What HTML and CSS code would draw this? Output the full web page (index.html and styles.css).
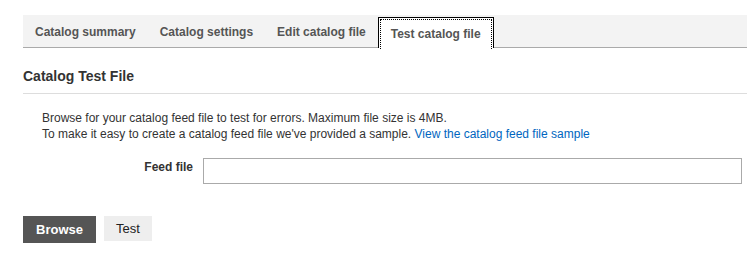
FILE: index.html
```html
<!DOCTYPE html>
<html lang="en">
<head>
    <meta charset="UTF-8">
    <meta name="viewport" content="width=device-width, initial-scale=1.0">
    <title>Test catalog file</title>
    <link rel="stylesheet" href="styles.css">
</head>
<body>
    <div class="page">
        <ul class="tabs">
            <li class="tab">Catalog summary</li>
            <li class="tab">Catalog settings</li>
            <li class="tab">Edit catalog file</li>
            <li class="tab active"><span class="tab-focus">Test catalog file</span></li>
        </ul>

        <h2 class="section-title">Catalog Test File</h2>

        <div class="section-body">
            <p class="intro">Browse for your catalog feed file to test for errors. Maximum file size is 4MB.<br>
            To make it easy to create a catalog feed file we've provided a sample. <a href="#">View the catalog feed file sample</a></p>
        </div>

        <div class="field-row">
            <label class="field-label" for="feed-file">Feed file</label>
            <input class="field-input" id="feed-file" type="text">
        </div>

        <div class="actions">
            <button class="btn btn-dark">Browse</button>
            <button class="btn btn-light">Test</button>
        </div>
    </div>
</body>
</html>
```

FILE: styles.css
```css
body {
    margin: 0;
    font-family: "Liberation Sans", Arial, sans-serif;
    color: #333;
    background: #fff;
}
.page {
    padding: 15px 0 0 23px;
}
.tabs {
    display: flex;
    margin: 0;
    padding: 0;
    list-style: none;
    background: #f3f3f3;
    border-bottom: 1px solid #aaa;
    height: 32px;
}
.tab {
    padding: 2px 12px 0 12px;
    font-size: 12px;
    font-weight: bold;
    color: #555;
    line-height: 30px;
}
.tab.active {
    margin-top: 2px;
    margin-bottom: -1px;
    padding: 1px 1px 0 1px;
    background: #fff;
    border: 1px solid #000;
    border-bottom: none;
}
.tab-focus {
    display: block;
    padding: 0 10px;
    line-height: 29px;
    border: 1px dotted #000;
    border-bottom: none;
    height: 30px;
    box-sizing: border-box;
}
.section-title {
    margin: 20px 0 0 0;
    padding-bottom: 8px;
    font-size: 14px;
    line-height: 17px;
    color: #333;
    border-bottom: 1px solid #ddd;
}
.section-body {
    padding: 16px 0 0 19px;
}
.intro {
    margin: 0;
    font-size: 12px;
    line-height: 16px;
}
.intro a {
    color: #0066c0;
    text-decoration: none;
}
.field-row {
    display: flex;
    gap: 10px;
    margin-top: 16px;
    padding-right: 5px;
}
.field-label {
    width: 170px;
    flex-shrink: 0;
    text-align: right;
    font-size: 12px;
    font-weight: bold;
    line-height: 16px;
    padding-top: 1px;
}
.field-input {
    flex: 1;
    height: 26px;
    box-sizing: border-box;
    border: 1px solid #aaa;
    margin: 0;
}
.actions {
    display: flex;
    gap: 8px;
    margin-top: 32px;
}
.btn {
    height: 27px;
    border: none;
    border-radius: 0;
    font-family: "Liberation Sans", Arial, sans-serif;
    font-size: 13px;
    cursor: pointer;
}
.btn-dark {
    padding: 0 13px;
    background: #555;
    color: #fff;
    font-weight: bold;
}
.btn-light {
    padding: 0 12px;
    height: 25px;
    background: #eee;
    color: #222;
}
```
